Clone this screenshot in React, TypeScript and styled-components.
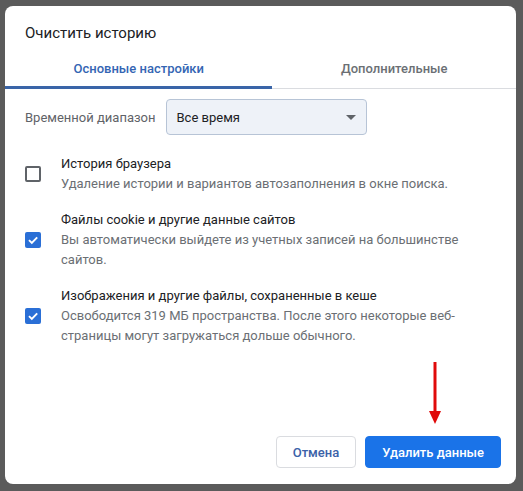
import React from "react";
import styled, { createGlobalStyle } from "styled-components";

const Global = createGlobalStyle`
  html, body { margin: 0; padding: 0; }
  body {
    background: #5b5b5b;
    font-family: Roboto, "Noto Sans", "Liberation Sans", sans-serif;
    width: 523px;
    height: 491px;
    overflow: hidden;
  }
`;

const Page = styled.div`
  padding: 6px 7px 7px 5px;
  box-sizing: border-box;
  width: 523px;
  height: 491px;
  position: relative;
`;

const Dialog = styled.div`
  position: relative;
  width: 511px;
  height: 478px;
  background: #fff;
  border-radius: 8px;
  display: flex;
  flex-direction: column;
  overflow: hidden;
`;

const Title = styled.div`
  padding: 17px 20px 0;
  font-size: 15px;
  line-height: 20px;
  color: #202124;
`;

const Tabs = styled.div`
  display: flex;
  margin-top: 6px;
  border-bottom: 1px solid #dadce0;
`;

const Tab = styled.div<{ $active?: boolean }>`
  flex: 1 1 auto;
  height: 39px;
  line-height: 39px;
  text-align: center;
  font-size: 13px;
  font-weight: 500;
  color: ${(p) => (p.$active ? "#3465b3" : "#6b6f74")};
  position: relative;
  &::after {
    content: "";
    display: ${(p) => (p.$active ? "block" : "none")};
    position: absolute;
    left: 0;
    right: 0;
    bottom: -1px;
    height: 3px;
    background: #3a65a8;
  }
`;

const Body = styled.div`
  padding: 10px 20px 0;
  display: flex;
  flex-direction: column;
`;

const RangeRow = styled.div`
  display: flex;
  align-items: center;
  gap: 11px;
`;

const RangeLabel = styled.span`
  font-size: 13px;
  color: #5f6368;
`;

const Select = styled.div`
  width: 201px;
  height: 36px;
  box-sizing: border-box;
  border: 1px solid #b7c4d6;
  border-radius: 4px;
  background: #eef2f8;
  display: flex;
  align-items: center;
  justify-content: space-between;
  padding: 0 10px 0 9px;
  font-size: 13px;
  color: #202124;
`;

const Caret = styled.span`
  width: 0;
  height: 0;
  border-left: 5px solid transparent;
  border-right: 5px solid transparent;
  border-top: 5px solid #5f6368;
`;

const Items = styled.div`
  margin-top: 19px;
  display: flex;
  flex-direction: column;
  gap: 16px;
`;

const Item = styled.div`
  display: flex;
  align-items: center;
  gap: 20px;
`;

const Box = styled.span<{ $checked?: boolean }>`
  flex: none;
  width: 16px;
  height: 16px;
  box-sizing: border-box;
  border-radius: 2px;
  border: ${(p) => (p.$checked ? "none" : "2px solid #5f6368")};
  background: ${(p) => (p.$checked ? "#2a6fd6" : "transparent")};
  display: flex;
  align-items: center;
  justify-content: center;
`;

const ItemText = styled.div`
  display: flex;
  flex-direction: column;
  font-size: 13px;
  line-height: 20px;
`;

const ItemTitle = styled.span`
  color: #202124;
`;

const ItemDesc = styled.span`
  color: #6b6f74;
`;

const Footer = styled.div`
  margin-top: auto;
  display: flex;
  justify-content: flex-end;
  gap: 9px;
  padding: 0 15px 16px;
`;

const Button = styled.button<{ $primary?: boolean }>`
  height: 32px;
  box-sizing: border-box;
  padding: 0 ${(p) => (p.$primary ? "16px" : "16px")};
  border-radius: 4px;
  font-family: inherit;
  font-size: 13px;
  font-weight: 500;
  cursor: pointer;
  border: 1px solid ${(p) => (p.$primary ? "#1a73e8" : "#dadce0")};
  background: ${(p) => (p.$primary ? "#1a73e8" : "#fff")};
  color: ${(p) => (p.$primary ? "#fff" : "#3b62a8")};
`;

const Arrow = styled.svg`
  position: absolute;
  left: 424px;
  top: 356px;
`;

const Check = () => (
  <svg width="12" height="12" viewBox="0 0 12 12">
    <path d="M2 6.2 L4.8 9 L10.2 3.3" fill="none" stroke="#fff" strokeWidth="1.9" />
  </svg>
);

const items = [
  {
    checked: false,
    title: "История браузера",
    desc: ["Удаление истории и вариантов автозаполнения в окне поиска."],
  },
  {
    checked: true,
    title: "Файлы cookie и другие данные сайтов",
    desc: ["Вы автоматически выйдете из учетных записей на большинстве", "сайтов."],
  },
  {
    checked: true,
    title: "Изображения и другие файлы, сохраненные в кеше",
    desc: ["Освободится 319 МБ пространства. После этого некоторые веб-", "страницы могут загружаться дольше обычного."],
  },
];

export default function App() {
  return (
    <>
      <Global />
      <Page>
        <Dialog>
          <Title>Очистить историю</Title>
          <Tabs>
            <Tab $active>Основные настройки</Tab>
            <Tab>Дополнительные</Tab>
          </Tabs>
          <Body>
            <RangeRow>
              <RangeLabel>Временной диапазон</RangeLabel>
              <Select>
                <span>Все время</span>
                <Caret />
              </Select>
            </RangeRow>
            <Items>
              {items.map((it) => (
                <Item key={it.title}>
                  <Box $checked={it.checked}>{it.checked && <Check />}</Box>
                  <ItemText>
                    <ItemTitle>{it.title}</ItemTitle>
                    {it.desc.map((d) => (
                      <ItemDesc key={d}>{d}</ItemDesc>
                    ))}
                  </ItemText>
                </Item>
              ))}
            </Items>
          </Body>
          <Footer>
            <Button>Отмена</Button>
            <Button $primary>Удалить данные</Button>
          </Footer>
        </Dialog>
        <Arrow width="22" height="72" viewBox="0 0 22 72">
          <line x1="11" y1="6" x2="11" y2="58" stroke="#e00a0a" strokeWidth="3" />
          <polygon points="5,55 17,55 11,68" fill="#e00a0a" />
        </Arrow>
      </Page>
    </>
  );
}
